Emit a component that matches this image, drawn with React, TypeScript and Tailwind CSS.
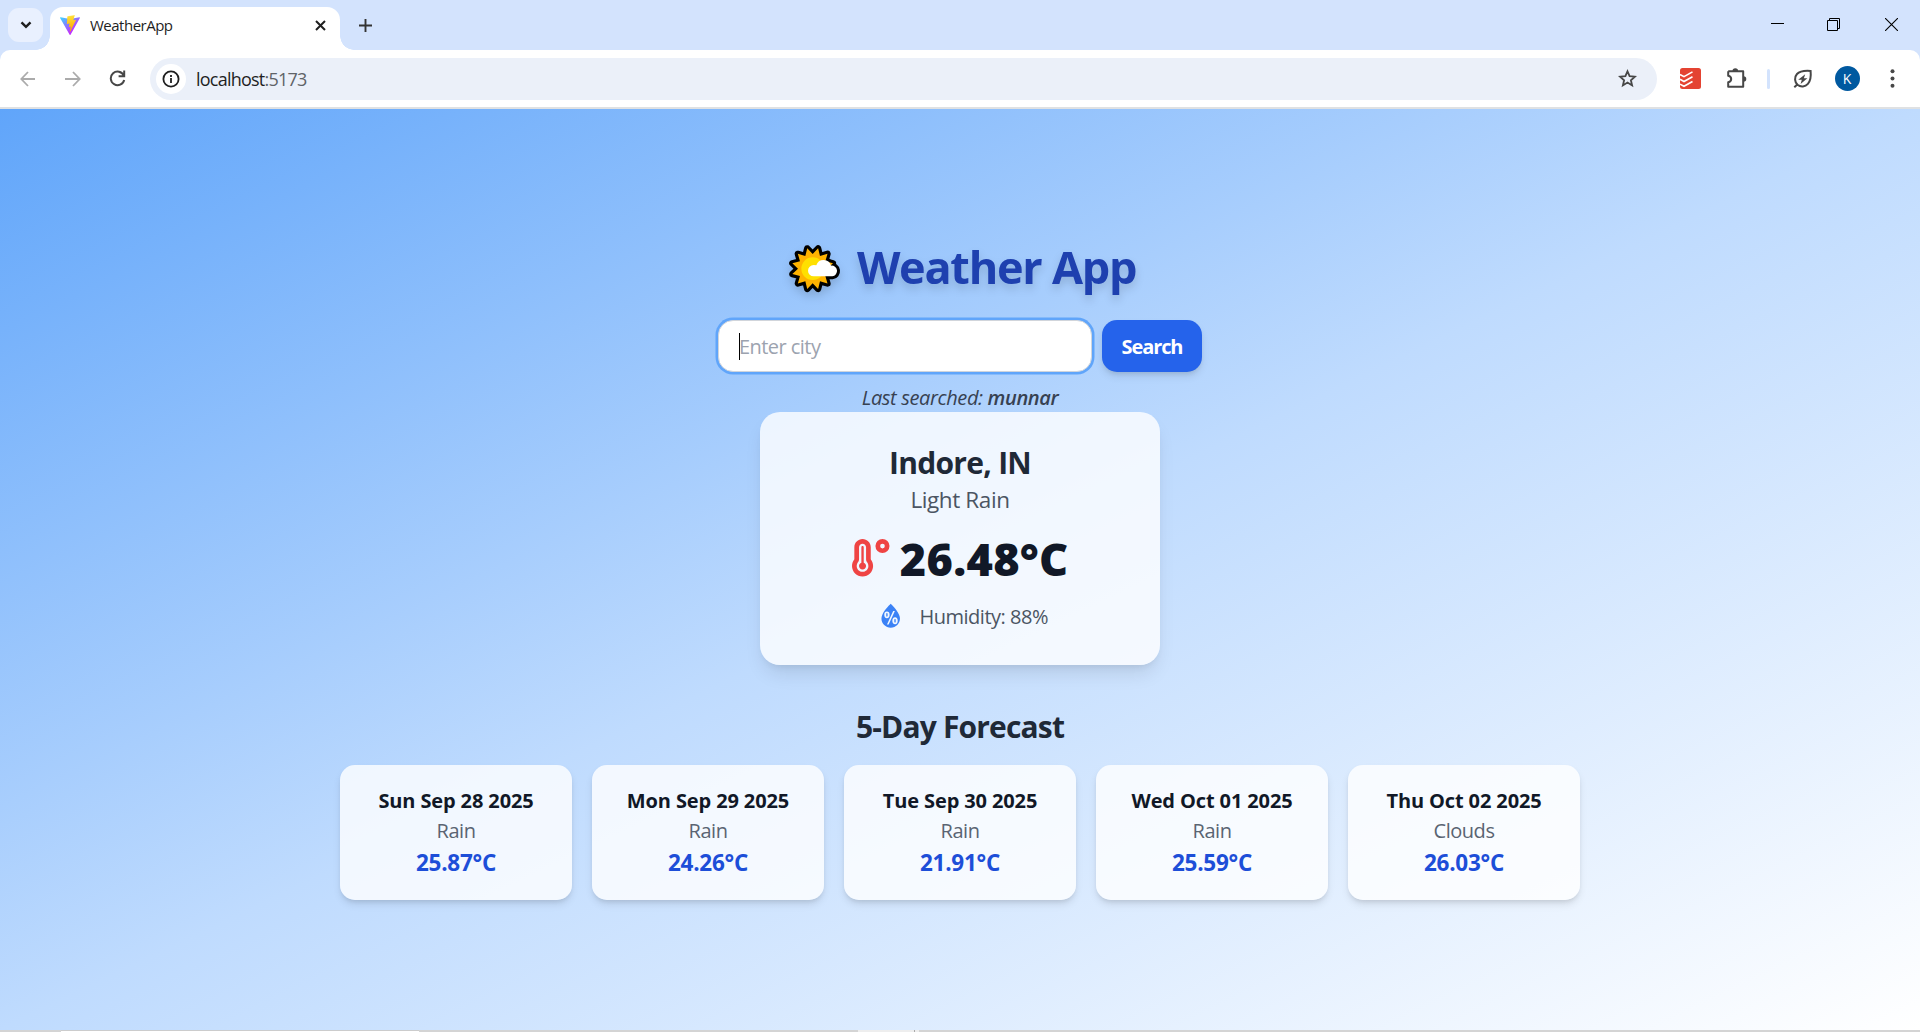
import type { ReactNode } from "react";
import { FaTemperatureHigh } from "react-icons/fa6";
import { WiHumidity } from "react-icons/wi";

function Stroke({ w, h, sw = 2, className, children }: { w: number; h: number; sw?: number; className?: string; children: ReactNode }) {
  return (
    <svg width={w} height={h} viewBox={`0 0 ${w} ${h}`} fill="none" stroke="currentColor" strokeWidth={sw} className={"shrink-0 " + (className ?? "")}>
      {children}
    </svg>
  );
}

function ViteLogo() {
  return (
    <svg width="20" height="20" viewBox="0 0 256 257" className="shrink-0">
      <defs>
        <linearGradient id="va" x1="-.8%" x2="57.6%" y1="7.7%" y2="78.4%">
          <stop offset="0%" stopColor="#41D1FF" />
          <stop offset="100%" stopColor="#BD34FE" />
        </linearGradient>
        <linearGradient id="vb" x1="43.4%" x2="50.3%" y1="2.2%" y2="89%">
          <stop offset="0%" stopColor="#FFEA83" />
          <stop offset="8.3%" stopColor="#FFDD35" />
          <stop offset="100%" stopColor="#FFA800" />
        </linearGradient>
      </defs>
      <path fill="url(#va)" d="M255.153 37.938L134.897 252.976c-2.483 4.44-8.862 4.466-11.382.048L.875 37.958c-2.746-4.814 1.371-10.646 6.827-9.67l120.385 21.517a6.537 6.537 0 0 0 2.322-.004l117.867-21.483c5.438-.991 9.574 4.796 6.877 9.62Z" />
      <path fill="url(#vb)" d="M185.432.063L96.44 17.501a3.268 3.268 0 0 0-2.634 3.014l-5.474 92.456a3.268 3.268 0 0 0 3.997 3.378l24.777-5.718c2.318-.535 4.413 1.507 3.936 3.838l-7.361 36.047c-.495 2.426 1.782 4.5 4.151 3.78l15.304-4.649c2.372-.72 4.652 1.36 4.15 3.788l-11.698 56.621c-.732 3.542 3.979 5.473 5.943 2.437l1.313-2.028l72.516-144.72c1.215-2.423-.88-5.186-3.54-4.672l-25.505 4.922c-2.396.462-4.435-1.77-3.759-4.114l16.646-57.705c.677-2.35-1.37-4.583-3.769-4.113Z" />
    </svg>
  );
}

const rays = Array.from({ length: 24 }, (_, i) => {
  const a = ((i * 15 + 15) * Math.PI) / 180;
  const r = i % 2 === 0 ? 63 : 44;
  return `${(98 + r * Math.sin(a)).toFixed(1)},${(99 - r * Math.cos(a)).toFixed(1)}`;
}).join(" ");
const cloud = "M101 122a17 17 0 0 1 0-34q5 0 8 1a23 23 0 0 1 44 1a16 16 0 0 1 4 32z";

function SunCloud() {
  return (
    <svg width="51" height="50" viewBox="27 25 153 150" className="mt-[3px] shrink-0 overflow-visible">
      <polygon points={rays} fill="#000" stroke="#000" strokeWidth="19" strokeLinejoin="round" />
      <path d={cloud} fill="#000" stroke="#000" strokeWidth="18" strokeLinejoin="round" />
      <polygon points={rays} fill="#ffb300" />
      <circle cx="98" cy="99" r="34" fill="#ffe000" />
      <path d={cloud} fill="#fff" />
    </svg>
  );
}

function BrowserChrome() {
  return (
    <header className="h-[109px]">
      <div className="flex h-[50px] items-start bg-[#d3e3fd]">
        <button className="mt-2 ml-2 flex h-[34px] w-[35px] items-center justify-center rounded-[11px] bg-[#e9f0fe] text-[#1f1f1f]">
          <Stroke w={12} h={8} sw={2.4}><path d="M1.5 1.3 6 5.8l4.5-4.5" /></Stroke>
        </button>
        <div className="relative mt-[7px] ml-[7px] flex h-[43px] w-[290px] items-center rounded-t-[13px] bg-white pr-[14px] pb-[7px] pl-[10px] text-[#1f1f1f]">
          <div className="absolute bottom-0 -left-[14px] size-[14px] bg-[radial-gradient(circle_at_0_0,transparent_13.5px,white_14px)]" />
          <div className="absolute -right-[14px] bottom-0 size-[14px] bg-[radial-gradient(circle_at_100%_0,transparent_13.5px,white_14px)]" />
          <ViteLogo />
          <span className="ml-[10px] text-[15px] tracking-[-0.5px]">WeatherApp</span>
          <Stroke w={11} h={11} sw={2} className="ml-auto"><path d="m1 1 9 9M10 1l-9 9" /></Stroke>
        </div>
        <Stroke w={13} h={13} sw={1.9} className="mt-[19px] ml-[19px] text-[#333]"><path d="M6.5 0v13M0 6.5h13" /></Stroke>
        <div className="mt-[18px] mr-[22px] ml-auto flex gap-[43px] text-black">
          <Stroke w={13} h={13} sw={1}><path d="M0 5.5h13" /></Stroke>
          <Stroke w={13} h={13} sw={1}><path d="M.5 2.5h10v10H.5zM2.5 2.5v-2h10v10h-2" /></Stroke>
          <Stroke w={13} h={13} sw={1.1} className="ml-[2px]"><path d="m0 0 13 13M13 0 0 13" /></Stroke>
        </div>
      </div>
      <div className="bg-[#d3e3fd]">
        <div className="flex h-[57px] items-center rounded-t-[10px] bg-white pl-5 text-[#474747]">
          <Stroke w={16} h={16} sw={1.8} className="text-[#ababab]"><path d="M15 8H1.5M8 1 1.3 8 8 15" /></Stroke>
          <Stroke w={16} h={16} sw={1.8} className="ml-[29px] text-[#ababab]"><path d="M0 8h14.5M8 1l6.7 7L8 15" /></Stroke>
          <Stroke w={17} h={17} sw={2} className="ml-[28px]"><path d="M14.8 5.6A6.8 6.8 0 1 0 15.2 10M15.2.6v5.6H9.6" /></Stroke>
          <div className="ml-[24px] flex h-[42px] w-[1507px] items-center rounded-full bg-[#ebf0f9] pr-5 pl-[6px]">
            <div className="flex size-[30px] items-center justify-center rounded-full bg-white text-[#1f1f1f]">
              <Stroke w={18} h={18} sw={1.8}><circle cx="9" cy="9" r="7.6" /><path d="M9 8v5M9 5v2" /></Stroke>
            </div>
            <span className="mt-[2px] ml-[10px] text-[18px] tracking-[-0.77px] text-[#5f6368]"><span className="text-[#1f1f1f]">localhost</span>:5173</span>
            <Stroke w={19} h={19} sw={1.8} className="ml-auto">
              <path d="m9.5 2.3 2.1 4.9 5.3.5-4 3.5 1.2 5.2-4.6-2.8-4.6 2.8 1.2-5.2-4-3.5 5.3-.5z" />
            </Stroke>
          </div>
          <svg width="21" height="21" viewBox="0 0 21 21" className="ml-[23px] shrink-0">
            <rect width="21" height="21" rx="2.5" fill="#e44332" />
            <path d="m0 6.5 4 2.2 8.5-4.8M0 11.3l4 2.2 8.5-4.8M0 16.1l4 2.2 8.5-4.8" fill="none" stroke="#fff" strokeWidth="1.6" />
          </svg>
          <svg width="21" height="21" viewBox="0 0 21 21" className="ml-[25px] shrink-0">
            <path d="M2.2 3.2h15v6M17.2 9v9.8h-15v-4.5q3-.6 3-3.3t-3-3.3V3.2" fill="none" stroke="#474747" strokeWidth="2" strokeLinejoin="round" />
            <path d="M6.5 3a2.8 2.8 0 0 1 5.600 0zM17.5 8.2a2.8 2.8 0 0 1 0 5.6z" fill="#474747" />
          </svg>
          <div className="ml-[20px] h-5 w-[2.5px] rounded-full bg-[#d3e3fd]" />
          <Stroke w={20} h={20} sw={2} className="ml-[23px]">
            <path d="M17.6 1.9C11 1.4 6.5 2.2 4 5c-3 3.3-2.3 8 .5 10.8 3.3 2.6 7.8 2 10.4-.9 2.6-2.9 3.3-7 2.7-13zM4.3 15.5l-3 2.8" />
            <path d="m12.2 5.3-7 5.5h3.6L7.6 14.9l6.8-5.6h-3.5z" fill="currentColor" stroke="none" />
          </Stroke>
          <div className="ml-[22px] flex size-[25px] items-center justify-center rounded-full bg-[#0059a0] text-[14px] text-white">K</div>
          <svg width="5" height="19" viewBox="0 0 5 19" fill="#474747" className="ml-[30px]">
            <circle cx="2.5" cy="2.3" r="2" /><circle cx="2.5" cy="9.5" r="2" /><circle cx="2.5" cy="16.7" r="2" />
          </svg>
        </div>
      </div>
      <div className="h-[2px] bg-[#dfe1e3]" />
    </header>
  );
}

const forecast = [
  { date: "Sun Sep 28 2025", sky: "Rain", temp: "25.87°C" },
  { date: "Mon Sep 29 2025", sky: "Rain", temp: "24.26°C" },
  { date: "Tue Sep 30 2025", sky: "Rain", temp: "21.91°C" },
  { date: "Wed Oct 01 2025", sky: "Rain", temp: "25.59°C" },
  { date: "Thu Oct 02 2025", sky: "Clouds", temp: "26.03°C" },
];

export default function App() {
  return (
    <div className="flex h-[1032px] w-[1920px] flex-col overflow-hidden font-['Open_Sans','Noto_Sans',sans-serif]">
      <BrowserChrome />
      <main className="flex h-[921px] flex-col items-center bg-[linear-gradient(to_bottom_right,#60a5fa,#bfdbfe,#ffffff)] pt-[133px]">
        <h1 className="ml-[5px] flex h-[50px] items-center gap-[17px] text-[45px] leading-[50px] font-bold tracking-[-1.26px] whitespace-nowrap text-[#1e40af] drop-shadow-[0_5px_4px_rgba(0,0,0,0.14)]">
          <SunCloud />
          <span>Weather App</span>
        </h1>
        <form className="mt-[28px] flex gap-[10px]">
          <div className="flex h-[52px] w-[374px] items-center rounded-[15px] border border-[#d1d5db] bg-white pl-5 shadow-[0_0_0_2.5px_#60a5fa]">
            <span className="h-[27px] w-px bg-black" />
            <span className="-ml-px pt-[2px] text-xl tracking-[-0.55px] text-[#9ca3af]">Enter city</span>
          </div>
          <div className="flex h-[52px] w-[100px] items-center justify-center rounded-[15px] bg-[#2563eb] pt-[2px] text-xl font-bold tracking-[-1.1px] text-white shadow-[0_5px_8px_-1px_rgba(0,0,0,0.1),0_3px_5px_-2px_rgba(0,0,0,0.1)]">
            Search
          </div>
        </form>
        <p className="mt-[11px] text-xl leading-[30px] tracking-[-0.37px] text-[#374151] italic">
          Last searched: <span className="font-semibold">munnar</span>
        </p>
        <section className="-mt-px flex h-[253px] w-[400px] shrink-0 flex-col items-center rounded-[20px] bg-white/80 pt-[31px] shadow-[0_12px_19px_-4px_rgba(0,0,0,0.1),0_5px_8px_-5px_rgba(0,0,0,0.1)]">
          <h2 className="text-[30px] leading-10 font-bold tracking-[-0.72px] text-[#1f2937]">Indore, IN</h2>
          <p className="-mt-px text-[22.5px] leading-[35px] tracking-[-0.4px] text-[#4b5563]">Light Rain</p>
          <div className="mt-[17px] ml-px flex h-[50px] items-center gap-[10px]">
            <FaTemperatureHigh className="size-[37.5px] -translate-y-px text-[#ef4444]" />
            <span className="text-[45px] leading-[50px] font-extrabold tracking-[0.3px] text-[#111827]">26.48°C</span>
          </div>
          <div className="mt-[17px] flex h-[30px] items-center gap-[10px]">
            <WiHumidity className="size-[37.5px] text-[#3b82f6]" />
            <span className="pt-[2px] text-xl leading-[30px] tracking-[-0.49px] text-[#4b5563]">Humidity: 88%</span>
          </div>
        </section>
        <h3 className="mt-[42px] text-[30px] leading-10 font-bold tracking-[-0.83px] text-[#1f2937]">5-Day Forecast</h3>
        <div className="mt-[18px] flex gap-5">
          {forecast.map((d) => (
            <article key={d.date} className="flex h-[135px] w-[232px] flex-col items-center rounded-[15px] bg-white/80 pt-[21px] shadow-[0_5px_8px_-1px_rgba(0,0,0,0.1),0_3px_5px_-2px_rgba(0,0,0,0.1)]">
              <p className="text-xl leading-[30px] font-bold tracking-[-0.12px] text-[#111827]">{d.date}</p>
              <p className="text-xl leading-[30px] tracking-[-0.46px] text-[#5a6472]">{d.sky}</p>
              <p className="-mt-px text-[22.5px] leading-[35px] font-bold tracking-[-0.25px] text-[#1d4ed8]">{d.temp}</p>
            </article>
          ))}
        </div>
      </main>
      <footer className="flex h-[2px] bg-[#d4d4d4]">
        <div className="ml-[61px] w-[358px] border-t border-[#cccccc] bg-white" />
        <div className="ml-[439px] w-[56px] bg-[#eeeeee]" />
        <div className="w-px bg-[#aaaaaa]" />
        <div className="w-1 bg-[#eeeeee]" />
      </footer>
    </div>
  );
}
